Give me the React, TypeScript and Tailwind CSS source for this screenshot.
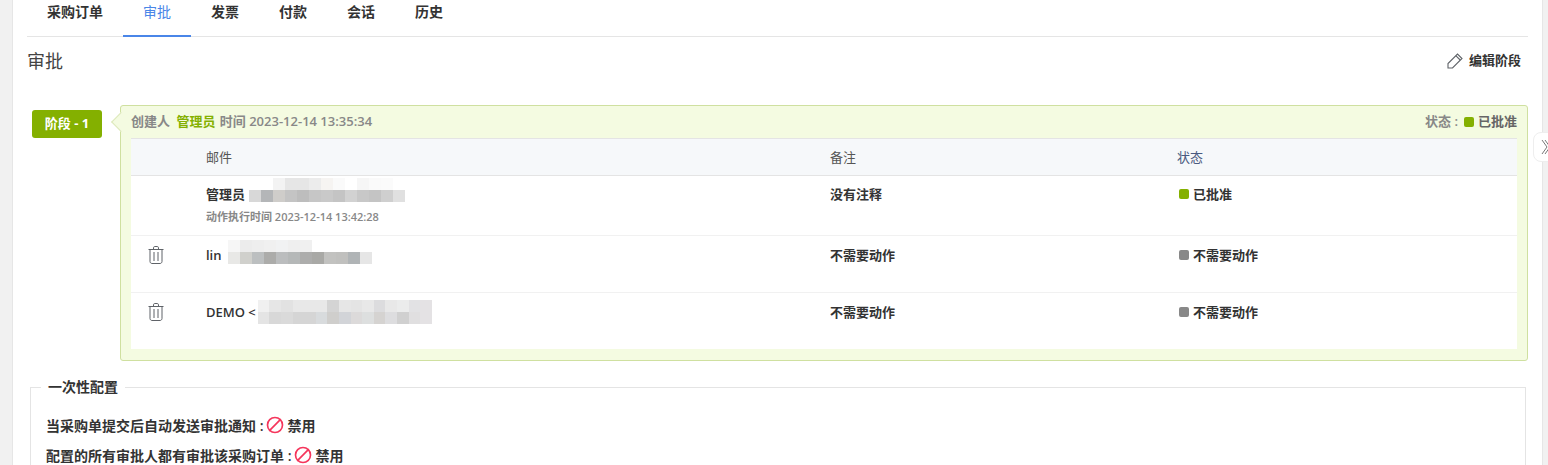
import { Ban } from 'lucide-react';

const tabs = ['采购订单', '审批', '发票', '付款', '会话', '历史'];

// mosaic blur over the e-mail addresses, one array per row of blocks
const blurAdmin = [
  ['#ffffff', '#ffffff', '#f3f3f3', '#e6e6e6', '#e6e6e6', '#ececec', '#f6f4f2', '#fafafa', '#ffffff', '#f6f6f6', '#fafafa', '#fbfbfb', '#ffffff'],
  ['#d8d8d8', '#b4b6b8', '#cfcdca', '#c4c4c4', '#bdbdbd', '#c6c6c6', '#c9c9c9', '#c4c4c4', '#d2d2d2', '#c8c8c8', '#c4c4c4', '#cfcfcf', '#e0e0e0'],
];
const blurLin = [
  ['#f6f6f6', '#ececec', '#eeeeee', '#f0f0f0', '#f1f2f3', '#efefef', '#f0f0f0', '#ffffff', '#ffffff', '#ffffff', '#ffffff', '#ffffff'],
  ['#e8e8e6', '#d0d0cc', '#bcbfc0', '#acacaa', '#bbbdbe', '#b5b8b8', '#adadac', '#a9a9a6', '#c2c2c0', '#c0c0be', '#b0b4b6', '#e6e6e6'],
];
const blurDemo = [
  ['#f0f0f0', '#e6e6e6', '#e2e2e2', '#e8e8e8', '#e8e8e8', '#e8e8e8', '#d4d4d4', '#e6e6e6', '#e4e4e4', '#e8e8e8', '#dcdcde', '#e8e8e8', '#ebecec', '#e2e2e4', '#e4e2e4'],
  ['#e4e4e4', '#d8d8d8', '#dadada', '#d5d5d5', '#d5d5d5', '#d8dbdd', '#cfcecc', '#d2d4d8', '#dcdada', '#dddfdf', '#d5d3d1', '#dddddf', '#d0d0d0', '#e0dfe0', '#e4e2e4'],
];

function Blur({ rows, className, cell }: { rows: string[][]; className: string; cell: string }) {
  return (
    <span className={`inline-flex flex-col ${className}`}>
      {rows.map((row, i) => (
        <span key={i} className="flex">
          {row.map((c, j) => (
            <span key={j} className={`h-[12px] ${cell}`} style={{ background: c }} />
          ))}
        </span>
      ))}
    </span>
  );
}

function Dot({ color }: { color: string }) {
  return <span className={`inline-block w-[10px] h-[10px] rounded-[2px] mr-1 ${color}`} />;
}

function TrashIcon() {
  return (
    <svg width="16" height="18" viewBox="0 0 16 18" fill="none" stroke="#5f6368" strokeWidth="1">
      <path d="M5.5 3V1.8c0-.7.5-1.3 1.2-1.3h2.6c.7 0 1.2.6 1.2 1.3V3" />
      <path d="M.5 3.5h15" />
      <path d="M2 3.5v12c0 1.1.9 2 2 2h8c1.1 0 2-.9 2-2v-12" />
      <path d="M6 6v9M10 6v9" />
    </svg>
  );
}

function PencilIcon() {
  return (
    <svg width="16" height="16" viewBox="0 0 16 16" fill="none" stroke="#5f6368" strokeWidth="1.1">
      <path d="M1 15V10.5L10.5 1l4.5 4.5L5.5 15H1z" />
      <path d="M9 2.8l4.2 4.2" />
    </svg>
  );
}

function Row({
  name,
  rows,
  note,
  status,
  dot,
  sub,
  trash,
  height,
  pad,
  blurClass,
  cell,
  border,
}: {
  name: string;
  rows: string[][];
  note: string;
  status: string;
  dot: string;
  sub?: string;
  trash?: boolean;
  height: string;
  pad: string;
  blurClass: string;
  cell: string;
  border?: boolean;
}) {
  return (
    <div className={`flex text-[13px] font-semibold text-[#333] ${height} ${border ? 'border-b border-[#f1f1f1]' : ''}`}>
      <div className="w-[75px] pt-[10px] pl-[17px]">{trash && <TrashIcon />}</div>
      <div className={`w-[624px] ${pad}`}>
        <div className="flex h-[20px] items-start">
          <span className="leading-[20px]">{name}</span>
          <Blur rows={rows} className={blurClass} cell={cell} />
        </div>
        {sub && <div className="mt-[6px] text-[11px] leading-[14px] text-[#888]">{sub}</div>}
      </div>
      <div className={`w-[349px] leading-[20px] ${pad}`}>{note}</div>
      <div className={`flex-1 leading-[20px] flex items-start ${pad}`}>
        <span className="flex items-center">
          <Dot color={dot} />
          {status}
        </span>
      </div>
    </div>
  );
}

export default function App() {
  return (
    <div
      className="h-[465px] w-[1548px] overflow-hidden bg-[#f1f1f1] flex"
      style={{ fontFamily: '"Open Sans", "Noto Sans CJK SC", sans-serif' }}
    >
      <div className="relative ml-3 w-[1531px] h-full bg-white border-x border-[#e6e6e6] pl-[14px] pr-[14px]">
        {/* Tabs */}
        <div className="flex h-[37px] border-b border-[#e5e5e5] text-[14px] font-semibold text-[#333]">
          {tabs.map((t, i) => (
            <div
              key={t}
              className={
                i === 1
                  ? 'px-[20px] h-[37px] pt-[3px] leading-[18px] border-b-2 border-[#4a86e8] text-[#4a86e8] font-normal'
                  : 'px-[20px] h-[37px] pt-[3px] leading-[18px]'
              }
            >
              {t}
            </div>
          ))}
        </div>

        {/* Heading */}
        <div className="flex justify-between items-center h-[48px] pr-[7px]">
          <h2 className="text-[18px] text-[#444] font-normal">审批</h2>
          <div className="flex items-center gap-[6px] text-[13px] font-semibold text-[#333]">
            <PencilIcon />
            编辑阶段
          </div>
        </div>

        {/* Stage */}
        <div className="flex mt-[20px] items-start">
          <div className="mt-[5px] ml-[5px] w-[70px] h-[28px] rounded-[3px] bg-[#84b000] text-white text-[13px] font-bold flex items-center justify-center">
            阶段 - 1
          </div>
          <div className="relative ml-[18px] w-[1408px] h-[256px] rounded-[3px] border border-[#cfe0a0] bg-[#f4fbe1] px-[10px]">
            <span className="absolute left-[-7px] top-[9px] w-[14px] h-[14px] rotate-45 bg-[#f4fbe1] border-l border-b border-[#dde8bc]" />
            <div className="relative flex justify-between items-center h-[32px] text-[13px] font-semibold text-[#888]">
              <div>
                创建人 <span className="text-[#84b000] ml-[3px]">管理员</span>
                <span className="ml-[1px]"> 时间 2023-12-14 13:35:34</span>
              </div>
              <div className="flex items-center">
                状态 :<span className="ml-[6px]" />
                <Dot color="bg-[#84b000]" />
                <span className="text-[#666]">已批准</span>
              </div>
            </div>
            <div className="bg-white h-[211px]">
              <div className="flex h-[38px] items-center bg-[#f6f8fa] border-y border-[#e4e4e4] text-[13px] text-[#555] pt-[1px]">
                <div className="w-[75px]" />
                <div className="w-[624px]">邮件</div>
                <div className="w-[347px]">备注</div>
                <div className="text-[#4a5a80]">状态</div>
              </div>
              <Row
                name="管理员"
                rows={blurAdmin}
                note="没有注释"
                status="已批准"
                dot="bg-[#84b000]"
                sub="动作执行时间 2023-12-14 13:42:28"
                height="h-[60px]"
                pad="pt-[8px]"
                blurClass="ml-[4px] -mt-[6px]"
                cell="w-[12px]"
                border
              />
              <Row
                name="lin"
                rows={blurLin}
                note="不需要动作"
                status="不需要动作"
                dot="bg-[#888888]"
                trash
                height="h-[57px]"
                pad="pt-[9px]"
                blurClass="ml-[6px] -mt-[5px]"
                cell="w-[12px]"
                border
              />
              <Row
                name="DEMO <"
                rows={blurDemo}
                note="不需要动作"
                status="不需要动作"
                dot="bg-[#888888]"
                trash
                height="h-[56px]"
                pad="pt-[9px]"
                blurClass="ml-[2px] -mt-[2px]"
                cell="w-[11.6px]"
              />
            </div>
          </div>
        </div>

        {/* Fieldset */}
        <fieldset className="mt-[17px] ml-[3px] w-[1496px] border border-[#e4e4e4] px-[15px] pb-[40px] text-[14px] font-semibold text-[#333]">
          <legend className="px-[7px] -ml-[5px] text-[14px] leading-[18px]">一次性配置</legend>
          <div className="mt-[18px] flex items-center h-[22px]">
            当采购单提交后自动发送审批通知 :
            <Ban size={18} strokeWidth={2.2} className="text-[#f5365c] mx-[3px] -scale-x-100" />
            禁用
          </div>
          <div className="mt-[8px] flex items-center h-[22px]">
            配置的所有审批人都有审批该采购订单 :
            <Ban size={18} strokeWidth={2.2} className="text-[#f5365c] mx-[3px] -scale-x-100" />
            禁用
          </div>
        </fieldset>

        {/* Side handle */}
        <div className="absolute left-[1520px] top-[132px] w-[20px] h-[30px] rounded-l-[8px] bg-white border border-[#eeeeee] flex items-center pl-[7px]">
          <svg width="9" height="16" viewBox="0 0 9 16" fill="none" stroke="#777" strokeWidth="1">
            <path d="M1 1l5 7-5 7M4 1l5 7-5 7" />
          </svg>
        </div>
      </div>
    </div>
  );
}
